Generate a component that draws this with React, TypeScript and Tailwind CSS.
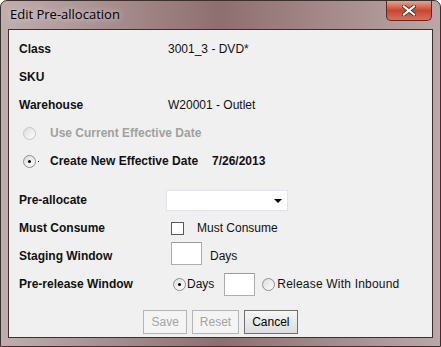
import React from 'react';

const font = { fontFamily: '"Liberation Sans", Arial, sans-serif' };

const Radio = ({ checked, disabled }: { checked?: boolean; disabled?: boolean }) => (
  <span
    className={`relative inline-block w-[13px] h-[13px] rounded-full border bg-gradient-to-br from-[#dcdcdc] to-white ${
      disabled ? 'border-[#c4c4c4]' : 'border-[#8f8f8f]'
    }`}
  >
    {checked && <span className="absolute left-[4px] top-[4px] w-[3px] h-[3px] rounded-full bg-black" />}
  </span>
);

const TextBox = () => <span className="inline-block w-[31px] h-[23px] bg-white border border-[#abadb3] border-t-[#9c9c9c]" />;

const Row = ({ label, children, className = '' }: { label: string; children?: React.ReactNode; className?: string }) => (
  <div className={`flex items-center h-7 ${className}`}>
    <span className="w-[149px] shrink-0 font-bold text-[#111]">{label}</span>
    {children}
  </div>
);

export default function App() {
  return (
    <div className="w-[441px] h-[347px] bg-white" style={font}>
      <div className="flex flex-col w-full h-full rounded-t-[7px] border border-[#3b3030] bg-gradient-to-r from-[#c0aeae] via-[#8e6f6f] to-[#bba7a7] overflow-hidden">
        {/* title bar */}
        <div className="relative flex items-center h-[28px] pl-[9px] shrink-0">
          <span className="text-[13px] text-black" style={{ fontFamily: '"Open Sans", "Noto Sans", sans-serif', textShadow: '0 0 6px rgba(255,255,255,0.8)' }}>
            Edit Pre-allocation
          </span>
          <div className="absolute right-[8px] top-0 w-[46px] h-[20px] rounded-b-[5px] border border-t-0 border-[#5c2a22] bg-gradient-to-b from-[#e6a08f] via-[#c8452e] to-[#d8705a] flex items-center justify-center">
            <svg width="14" height="11" viewBox="0 0 14 11">
              <path d="M2 1.5 L12 9.5 M12 1.5 L2 9.5" stroke="#3a3a3a" strokeWidth="4" strokeLinecap="square" />
              <path d="M2 1.5 L12 9.5 M12 1.5 L2 9.5" stroke="#ffffff" strokeWidth="2.2" strokeLinecap="square" />
            </svg>
          </div>
        </div>

        {/* content */}
        <div className="flex-1 mx-[7px] mb-[8px] border border-[#3b3030] bg-[#f0f0f0] pl-[10px] pt-[5px] text-[12px] text-[#111] flex flex-col">
          <Row label="Class">
            <span className="font-normal">3001_3 - DVD*</span>
          </Row>
          <Row label="SKU" />
          <Row label="Warehouse">
            <span>W20001 - Outlet</span>
          </Row>
          <div className="flex items-center h-7 pl-[4px]">
            <Radio disabled />
            <span className="ml-[14px] font-bold text-[#a0a0a0]">Use Current Effective Date</span>
          </div>
          <div className="flex items-center h-7 pl-[4px]">
            <Radio checked />
            <span className="ml-[2px] w-[1px] h-[1px] bg-black" />
            <span className="ml-[11px] font-bold w-[162px]">Create New Effective Date</span>
            <span className="font-bold">7/26/2013</span>
          </div>

          <Row label="Pre-allocate" className="mt-[11px]">
            <span className="relative inline-block w-[122px] h-[21px] bg-white border border-[#e2e3ea] -ml-[2px]">
              <span className="absolute right-[5px] top-[8px] w-0 h-0 border-l-[4px] border-r-[4px] border-t-[4px] border-l-transparent border-r-transparent border-t-black" />
            </span>
          </Row>
          <Row label="Must Consume">
            <span className="inline-block w-[13px] h-[13px] ml-[3px] bg-white border border-[#5a5a5a]" />
            <span className="ml-[13px]">Must Consume</span>
          </Row>
          <Row label="Staging Window">
            <span className="ml-[3px]"><TextBox /></span>
            <span className="ml-[8px]">Days</span>
          </Row>
          <Row label="Pre-release Window">
            <span className="ml-[5px] flex"><Radio checked /></span>
            <span className="ml-[1px]">Days</span>
            <span className="ml-[10px] flex"><TextBox /></span>
            <span className="ml-[7px] flex"><Radio /></span>
            <span className="ml-[2px] tracking-[0.2px]">Release With Inbound</span>
          </Row>

          <div className="flex justify-center gap-[5px] mt-[12px] pr-[10px]">
            <button className="h-[24px] px-[7px] border border-[#b5b5b5] bg-[#f4f4f4] text-[#a3a3a3]">Save</button>
            <button className="h-[24px] px-[7px] border border-[#b5b5b5] bg-[#f4f4f4] text-[#a3a3a3]">Reset</button>
            <button className="h-[24px] px-[7px] border border-[#707070] bg-gradient-to-b from-[#f6f6f6] to-[#dddddd] text-black">Cancel</button>
          </div>
        </div>
      </div>
    </div>
  );
}
